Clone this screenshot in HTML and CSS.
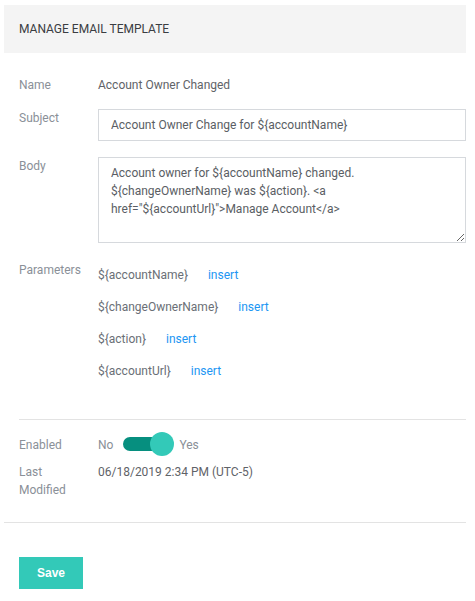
FILE: index.html
```html
<!DOCTYPE html>
<html>
<head>
<meta charset="utf-8">
<link rel="stylesheet" href="styles.css">
</head>
<body>
<div class="page">
  <div class="header">MANAGE EMAIL TEMPLATE</div>
  <div class="form">
    <div class="row row-name">
      <div class="label">Name</div>
      <div class="value">Account Owner Changed</div>
    </div>
    <div class="row row-subject">
      <div class="label">Subject</div>
      <input class="input" type="text" value="Account Owner Change for ${accountName}">
    </div>
    <div class="row row-body">
      <div class="label">Body</div>
      <textarea class="textarea">Account owner for ${accountName} changed. ${changeOwnerName} was ${action}. &lt;a href="${accountUrl}"&gt;Manage Account&lt;/a&gt;</textarea>
    </div>
    <div class="row row-params">
      <div class="label">Parameters</div>
      <div class="params">
        <div class="param"><span>${accountName}</span><a class="insert">insert</a></div>
        <div class="param"><span>${changeOwnerName}</span><a class="insert">insert</a></div>
        <div class="param"><span>${action}</span><a class="insert">insert</a></div>
        <div class="param"><span>${accountUrl}</span><a class="insert">insert</a></div>
      </div>
    </div>
    <hr class="sep">
    <div class="row row-enabled">
      <div class="label">Enabled</div>
      <div class="value toggle-wrap">
        <span>No</span>
        <span class="toggle"><span class="track"></span><span class="thumb"></span></span>
        <span>Yes</span>
      </div>
    </div>
    <div class="row row-modified">
      <div class="label">Last<br>Modified</div>
      <div class="value">06/18/2019 2:34 PM (UTC-5)</div>
    </div>
  </div>
  <hr class="sep-full">
  <div class="actions">
    <button class="save">Save</button>
  </div>
</div>
</body>
</html>
```
FILE: styles.css
```css
html, body {
  margin: 0;
  padding: 0;
  background: #ffffff;
}
.page {
  margin: 5px 9px 0 4px;
  font-family: Roboto, "Liberation Sans", sans-serif;
  font-size: 12px;
  color: #5f6368;
}
.header {
  background: #f4f4f4;
  height: 48px;
  display: flex;
  align-items: center;
  padding-left: 15px;
  color: #3a3d42;
  font-size: 12px;
}
.form {
  padding: 23px 0 0 15px;
}
.row {
  display: flex;
  align-items: flex-start;
}
.label {
  width: 79px;
  flex: none;
  color: #8a9098;
  line-height: 18px;
}
.value {
  color: #5f6368;
  line-height: 18px;
}
.row-name {
  margin-bottom: 15px;
}
.row-subject .label,
.row-body .label {
  line-height: 16px;
  padding-top: 1px;
}
.input {
  box-sizing: border-box;
  flex: 1;
  height: 32px;
  margin: 0;
  border: 1px solid #d6d9dd;
  border-radius: 0;
  padding: 0 12px;
  font-family: Roboto, "Liberation Sans", sans-serif;
  font-size: 12px;
  color: #5a5e64;
  outline: none;
}
.row-body {
  margin-top: 16px;
}
.textarea {
  display: block;
  box-sizing: border-box;
  flex: 1;
  height: 86px;
  margin: 0;
  border: 1px solid #d6d9dd;
  border-radius: 0;
  padding: 6px 12px;
  font-family: Roboto, "Liberation Sans", sans-serif;
  font-size: 12px;
  line-height: 18px;
  color: #5a5e64;
  outline: none;
  resize: both;
}
.row-params {
  margin-top: 16px;
}
.row-params .label {
  line-height: 22px;
}
.params {
  display: flex;
  flex-direction: column;
}
.param {
  height: 32px;
  line-height: 32px;
  display: flex;
  gap: 20px;
  color: #6a6f76;
}
.insert {
  color: #2196f3;
  cursor: pointer;
}
.sep {
  border: 0;
  border-top: 1px solid #e3e3e3;
  margin: 32px 0 16px 0;
}
.row-enabled .value {
  display: flex;
  align-items: center;
  line-height: 18px;
  color: #8a9098;
}
.toggle {
  position: relative;
  width: 51px;
  height: 18px;
  margin: 0 5px 0 10px;
}
.track {
  position: absolute;
  left: 0;
  top: 1px;
  width: 44px;
  height: 14px;
  border-radius: 7px;
  background: #068f7f;
}
.thumb {
  position: absolute;
  left: 27px;
  top: -4px;
  width: 24px;
  height: 24px;
  border-radius: 50%;
  background: #33c9b8;
}
.row-modified {
  margin-top: 9px;
}
.sep-full {
  border: 0;
  border-top: 1px solid #e3e3e3;
  margin: 23px 0 0 0;
}
.actions {
  padding: 34px 0 0 15px;
}
.save {
  width: 64px;
  height: 32px;
  border: 0;
  border-radius: 0;
  background: #33c9b8;
  color: #ffffff;
  font-family: "Liberation Sans", Arial, sans-serif;
  font-weight: bold;
  font-size: 12px;
  padding: 0;
}
```
